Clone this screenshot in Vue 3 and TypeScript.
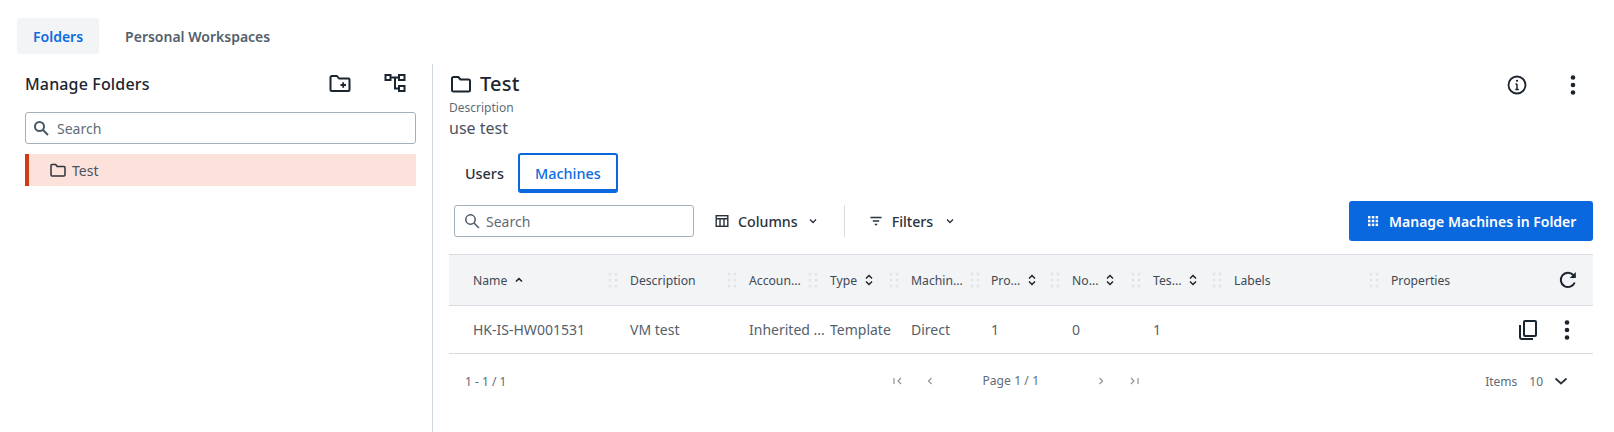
<script setup lang="ts">
interface Col { label: string; sort?: 'asc' | 'both'; handle?: boolean; }
const cols: Col[] = [
  { label: 'Name', sort: 'asc', handle: true },
  { label: 'Description', handle: true },
  { label: 'Accoun...', handle: true },
  { label: 'Type', sort: 'both', handle: true },
  { label: 'Machin...', handle: true },
  { label: 'Pro...', sort: 'both', handle: true },
  { label: 'No...', sort: 'both', handle: true },
  { label: 'Tes...', sort: 'both', handle: true },
  { label: 'Labels', handle: true },
  { label: 'Properties' },
];
const row = ['HK-IS-HW001531', 'VM test', 'Inherited ...', 'Template', 'Direct', '1', '0', '1', '', ''];
const dots = [0, 1, 2];
</script>

<template>
  <div class="page">
    <nav class="top-tabs">
      <button class="top-tab active">Folders</button>
      <button class="top-tab">Personal Workspaces</button>
    </nav>
    <div class="split">
      <aside class="side">
        <div class="side-head">
          <h2>Manage Folders</h2>
          <div class="side-icons">
            <svg width="24" height="24" viewBox="0 0 24 24" fill="none" stroke="#1b2530" stroke-width="2"><path d="M2.500 6.500A1.500 1.500 0 0 1 4 5h5l2 2.500h9.500a1 1 0 0 1 1 1V19a1 1 0 0 1-1 1H4a1.500 1.500 0 0 1-1.500-1.500z" stroke-linejoin="round"/><path d="M12.500 14h5.500M15.200 11.200v5.600" stroke-width="1.800"/></svg>
            <svg width="24" height="24" viewBox="0 0 24 24" fill="none" stroke="#1b2530" stroke-width="2"><rect x="2.500" y="4" width="5" height="5"/><rect x="16" y="4" width="5.500" height="5"/><rect x="16" y="15" width="5.500" height="5"/><path d="M7.500 6.500H16M12 6.500V17.500H16"/></svg>
          </div>
        </div>
        <label class="search side-search">
          <svg width="18" height="18" viewBox="0 0 18 18" fill="none" stroke="#4a5764" stroke-width="2"><circle cx="7.500" cy="7.500" r="4.500"/><path d="M11 11l5 5"/></svg>
          <span>Search</span>
        </label>
        <div class="tree-row">
          <svg width="18" height="18" viewBox="0 0 18 18" fill="none" stroke="#2a333d" stroke-width="1.500"><path d="M2 4.500a1 1 0 0 1 1-1h3.700l1.500 2H15a1 1 0 0 1 1 1V14a1 1 0 0 1-1 1H3a1 1 0 0 1-1-1z" stroke-linejoin="round"/></svg>
          <span>Test</span>
        </div>
      </aside>
      <main class="content">
        <header class="head">
          <div class="head-left">
            <div class="title">
              <svg width="24" height="24" viewBox="0 0 24 24" fill="none" stroke="#1b2530" stroke-width="2"><path d="M3 6.500a1.500 1.500 0 0 1 1.500-1.500h4.800l2.200 2.500h8A1.500 1.500 0 0 1 21 9v9a1.500 1.500 0 0 1-1.500 1.500h-15A1.500 1.500 0 0 1 3 18z" stroke-linejoin="round"/></svg>
              <h1>Test</h1>
            </div>
            <div class="desc-label">Description</div>
            <div class="desc">use test</div>
          </div>
          <div class="head-icons">
            <svg width="24" height="24" viewBox="0 0 24 24" fill="none" stroke="#1b2530" stroke-width="1.800"><circle cx="12" cy="12" r="8.500"/><path d="M12 11v5.500M10.200 16.500h3.600M10.500 11H12" stroke-width="1.500"/><circle cx="12" cy="7.800" r="1.100" fill="#1b2530" stroke="none"/></svg>
            <svg width="6" height="24" viewBox="0 0 6 24" fill="#1b2530"><circle cx="3" cy="4.500" r="2.300"/><circle cx="3" cy="12" r="2.300"/><circle cx="3" cy="19.500" r="2.300"/></svg>
          </div>
        </header>
        <div class="sub-tabs">
          <button class="sub-tab">Users</button>
          <button class="sub-tab active">Machines</button>
        </div>
        <div class="toolbar">
          <label class="search tool-search">
            <svg width="18" height="18" viewBox="0 0 18 18" fill="none" stroke="#4a5764" stroke-width="1.500"><circle cx="7.500" cy="7.500" r="4.700"/><path d="M11 11l5 5"/></svg>
            <span>Search</span>
          </label>
          <button class="tool-btn col-btn">
            <svg width="16" height="16" viewBox="0 0 16 16" fill="none" stroke="#2a333d" stroke-width="1.400"><rect x="2.200" y="2.700" width="11.600" height="10.600"/><path d="M2.200 5.800h11.600M6 5.800v7.500M10 5.800v7.500"/></svg>
            <span>Columns</span>
            <svg class="chev" width="12" height="12" viewBox="0 0 12 12" fill="none" stroke="#2a333d" stroke-width="1.400"><path d="M3 4.500l3 3 3-3"/></svg>
          </button>
          <i class="tool-div"></i>
          <button class="tool-btn filter-btn">
            <svg width="16" height="16" viewBox="0 0 16 16" fill="none" stroke="#2a333d" stroke-width="1.400"><path d="M2.500 4.500h11M4.800 8h6.400M6.800 11.500h2.400"/></svg>
            <span>Filters</span>
            <svg class="chev" width="12" height="12" viewBox="0 0 12 12" fill="none" stroke="#2a333d" stroke-width="1.400"><path d="M3 4.500l3 3 3-3"/></svg>
          </button>
          <button class="primary">
            <svg width="12" height="12" viewBox="0 0 12 12" fill="#fff"><template v-for="y in dots" :key="y"><rect v-for="x in dots" :key="x" :x="1 + x * 3.800" :y="1 + y * 3.800" width="2.500" height="2.500" /></template></svg>
            <span>Manage Machines in Folder</span>
          </button>
        </div>
        <div class="table">
          <div class="t-row t-head">
            <div v-for="(c, i) in cols" :key="i" class="cell">
              <span>{{ c.label }}</span>
              <svg v-if="c.sort === 'asc'" class="sort" width="12" height="12" viewBox="0 0 12 12" fill="none" stroke="#1b2530" stroke-width="1.600"><path d="M3 7.500L6 4.700l3 2.800"/></svg>
              <svg v-if="c.sort === 'both'" class="sort" width="12" height="14" viewBox="0 0 12 14" fill="none" stroke="#1b2530" stroke-width="1.500"><path d="M3 5.500L6 2.500l3 3M3 8.500l3 3 3-3"/></svg>
              <svg v-if="c.handle" class="handle" width="12" height="18" viewBox="0 0 12 18" fill="#e1e4e8"><template v-for="y in dots" :key="y"><circle cx="3" :cy="3 + y * 6" r="1.500"/><circle cx="9" :cy="3 + y * 6" r="1.500"/></template></svg>
            </div>
            <div class="cell end">
              <svg width="24" height="24" viewBox="0 0 24 24" fill="none" stroke="#1b2530" stroke-width="2"><path d="M18.700 14.500A7.200 7.200 0 1 1 17.300 7L19 8.800"/><path d="M19.800 4v6h-6" fill="#1b2530" stroke="none"/></svg>
            </div>
          </div>
          <div class="t-row t-body">
            <div v-for="(v, i) in row" :key="i" class="cell">{{ v }}</div>
            <div class="cell actions">
              <svg width="24" height="24" viewBox="0 0 24 24" fill="none" stroke="#1b2530" stroke-width="2"><rect x="8" y="3" width="12" height="15" rx="1"/><path d="M4 7v12a2 2 0 0 0 2 2h11"/></svg>
              <svg width="6" height="24" viewBox="0 0 6 24" fill="#1b2530"><circle cx="3" cy="4.500" r="2.300"/><circle cx="3" cy="12" r="2.300"/><circle cx="3" cy="19.500" r="2.300"/></svg>
            </div>
          </div>
        </div>
        <footer class="pager">
          <div class="count">1 - 1 / 1</div>
          <div class="pages">
            <svg width="14" height="14" viewBox="0 0 14 14" fill="none" stroke="#8b949e" stroke-width="1.200"><path d="M3 4v6M10 4L7 7l3 3"/></svg>
            <svg class="pg2" width="14" height="14" viewBox="0 0 14 14" fill="none" stroke="#8b949e" stroke-width="1.200"><path d="M8.500 4L5.500 7l3 3"/></svg>
            <span class="page-txt">Page 1 / 1</span>
            <svg class="pg3" width="14" height="14" viewBox="0 0 14 14" fill="none" stroke="#8b949e" stroke-width="1.200"><path d="M5.500 4l3 3-3 3"/></svg>
            <svg class="pg4" width="14" height="14" viewBox="0 0 14 14" fill="none" stroke="#8b949e" stroke-width="1.200"><path d="M4 4l3 3-3 3M11 4v6"/></svg>
          </div>
          <div class="items">
            <span>Items</span><span class="ten">10</span>
            <svg width="16" height="16" viewBox="0 0 16 16" fill="none" stroke="#2a333d" stroke-width="1.800"><path d="M2.500 5.500L8 10.500l5.500-5"/></svg>
          </div>
        </footer>
      </main>
    </div>
  </div>
</template>

<style>
html, body { margin: 0; background: #fff; }
</style>

<style scoped>
.page { width: 1614px; height: 432px; overflow: hidden; font-family: "Noto Sans", sans-serif; color: #1b2530; box-sizing: border-box; padding: 18px 0 0; }
button { font-family: inherit; border: 0; background: none; padding: 0; }
svg { display: block; flex: none; }
.top-tabs { display: flex; padding-left: 17px; height: 36px; }
.top-tab { height: 36px; padding: 0 16px; font-size: 14px; font-weight: 600; color: #545f6b; border-radius: 3px; margin-right: 10px; }
.top-tab.active { background: #f3f4f6; color: #0a6ce0; }
.split { display: flex; margin-top: 10px; height: 368px; }
.side { width: 433px; flex: none; box-sizing: border-box; border-right: 1px solid #cfd6dd; padding: 0 16px 0 25px; }
.side-head { display: flex; align-items: center; justify-content: space-between; height: 38px; padding-top: 2px; box-sizing: border-box; }
.side-head h2 { margin: 0; font-size: 16px; font-weight: 500; letter-spacing: 0.15px; }
.side-icons { display: flex; gap: 31px; padding-right: 9px; margin-top: -2px; }
.search { display: flex; align-items: center; box-sizing: border-box; border: 1px solid #a3afba; border-radius: 3px; background: #fff; font-size: 14px; color: #5f6b77; height: 32px; padding-left: 6px; gap: 7px; }
.side-search { margin-top: 10px; width: 391px; }
.tree-row { display: flex; align-items: center; gap: 5px; margin-top: 10px; height: 32px; box-sizing: border-box; background: #fde2dc; border-left: 4px solid #d13a12; font-size: 14px; padding-left: 20px; width: 391px; color: #4a545f; }
.content { flex: 1; padding: 0 21px 0 16px; min-width: 0; }
.head { display: flex; justify-content: space-between; }
.title { display: flex; align-items: center; gap: 7px; height: 35px; padding-top: 2px; box-sizing: content-box; }
.title h1 { margin: 0; font-size: 20px; font-weight: 500; line-height: 28px; letter-spacing: 0.2px; }
.desc-label { font-size: 12px; line-height: 14px; color: #5f6b77; }
.desc { font-size: 16px; line-height: 20px; color: #4a545f; margin-top: 3px; }
.head-icons { display: flex; align-items: flex-start; gap: 41px; padding: 9px 17px 0 0; }
.sub-tabs { display: flex; margin-top: 15px; height: 40px; }
.sub-tab { padding: 0 13px 0 16px; font-size: 14.4px; font-weight: 500; color: #2a333d; height: 40px; }
.sub-tab.active { box-sizing: border-box; border: 2px solid #0a68df; border-bottom-width: 4px; border-radius: 3px; color: #0a6ce0; padding: 2px 15px 0; margin-left: 1px; }
.toolbar { display: flex; align-items: center; margin-top: 8px; height: 40px; padding-left: 5px; }
.tool-search { width: 240px; height: 32px; padding-left: 8px; gap: 5px; }
.tool-btn { display: flex; align-items: center; font-size: 14.200px; font-weight: 500; color: #2a333d; gap: 8px; }
.col-btn { margin-left: 20px; }
.col-btn .chev { margin-left: 1px; }
.tool-div { width: 1px; height: 32px; background: #d8dde2; margin-left: 25px; }
.filter-btn { margin-left: 23px; }
.filter-btn .chev { margin-left: 3px; }
.primary { display: flex; align-items: center; gap: 10px; margin-left: auto; height: 40px; width: 244px; box-sizing: border-box; padding-left: 18px; background: #0a68df; border-radius: 3px; color: #fff; font-size: 14px; font-weight: 600; }
.table { margin-top: 13px; }
.t-row { display: grid; grid-template-columns: 181px 119px 81px 81px 80px 81px 81px 81px 157px 177px 1fr; }
.t-head { height: 52px; background: #f3f4f6; border-top: 1px solid #d5dbe0; border-bottom: 1px solid #d5dbe0; box-sizing: border-box; }
.t-body { height: 48px; border-bottom: 1px solid #d5dbe0; box-sizing: border-box; font-size: 14px; color: #55606b; }
.cell { display: flex; align-items: center; min-width: 0; white-space: nowrap; }
.cell:first-child { padding-left: 24px; }
.t-head .cell { font-size: 12.200px; color: #3f4954; gap: 6px; padding-right: 11px; }
.handle { margin-left: auto; }
.end { justify-content: flex-end; padding-right: 13px !important; }
.actions { justify-content: flex-end; gap: 24px; padding-right: 23px; }
.pager { display: flex; align-items: center; height: 54px; font-size: 12px; color: #5f6b77; }
.count { padding-left: 16px; }
.pages { display: flex; align-items: center; margin-left: 385px; }
.pg2 { margin-left: 18px; }
.page-txt { margin: 0 55px 0 45px; position: relative; top: -1px; letter-spacing: 0.1px; }
.pg4 { margin-left: 19px; }
.items { display: flex; align-items: center; margin-left: auto; padding-right: 24px; }
.ten { margin: 0 10px 0 12px; }
</style>
